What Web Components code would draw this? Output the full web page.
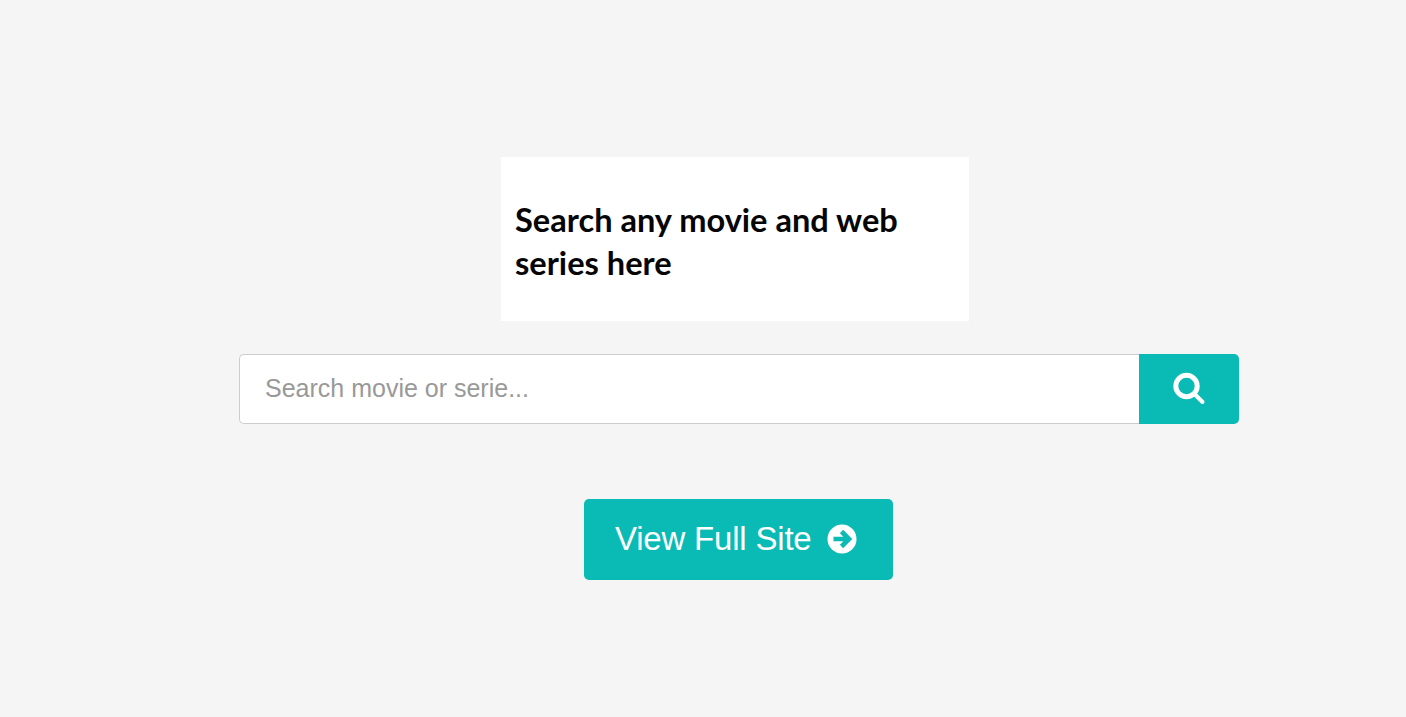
<!DOCTYPE html>
<html lang="en">
<head>
<meta charset="utf-8">
<title>Search</title>
<style>
html, body { margin: 0; background: #f5f5f5; }
</style>
</head>
<body>
<search-page>
  <search-banner>Search any movie and web<br>series here</search-banner>
  <search-box placeholder="Search movie or serie..."></search-box>
  <site-link>View Full Site</site-link>
</search-page>
<script>
(function () {
  class SearchPage extends HTMLElement {
    constructor() {
      super();
      this.attachShadow({ mode: "open" }).innerHTML = `
<style>
:host {
  display: flex;
  flex-direction: column;
  align-items: flex-start;
  box-sizing: border-box;
  height: 717px;
  padding: 157px 0 0 239px;
  overflow: hidden;
  background: #f5f5f5;
  font-family: "Liberation Sans", Arial, sans-serif;
}
</style>
<slot></slot>`;
    }
  }

  class SearchBanner extends HTMLElement {
    constructor() {
      super();
      this.attachShadow({ mode: "open" }).innerHTML = `
<style>
:host {
  display: flex;
  align-items: center;
  box-sizing: border-box;
  width: 468px;
  height: 164px;
  margin-left: 262px;
  padding: 4px 0 0 14px;
  background: #fff;
  color: #050505;
  font: 700 32.6px/43px Lato, "Open Sans", sans-serif;
  white-space: nowrap;
}
</style>
<div><slot></slot></div>`;
    }
  }

  class SearchBox extends HTMLElement {
    constructor() {
      super();
      this.attachShadow({ mode: "open" }).innerHTML = `
<style>
:host {
  display: flex;
  width: 1000px;
  height: 70px;
  margin-top: 33px;
}
input {
  flex: 1;
  min-width: 0;
  box-sizing: border-box;
  height: 100%;
  padding: 0 25px 2px;
  border: 1px solid #ccc;
  border-right: 0;
  border-radius: 5px 0 0 5px;
  outline: 0;
  background: #fff;
  color: #333;
  font: 25px "Liberation Sans", Arial, sans-serif;
}
input::placeholder { color: #999; opacity: 1; }
button {
  display: flex;
  align-items: center;
  justify-content: center;
  width: 100px;
  padding: 0;
  border: 0;
  border-radius: 0 5px 5px 0;
  background: #0abab5;
}
svg { display: block; width: 34px; height: 34px; }
</style>
<input type="text">
<button type="button" aria-label="Search">
  <svg viewBox="0 0 34 34" fill="none" stroke="#fff" stroke-linecap="round">
    <circle cx="14.500" cy="14" r="10.700" stroke-width="5"/>
    <path d="M23.500 23l7 7" stroke-width="4"/>
  </svg>
</button>`;
      this.shadowRoot.querySelector("input").placeholder = this.getAttribute("placeholder");
    }
  }

  class SiteLink extends HTMLElement {
    constructor() {
      super();
      this.attachShadow({ mode: "open" }).innerHTML = `
<style>
:host {
  display: block;
  margin: 75px 0 0 345px;
}
a {
  display: flex;
  align-items: center;
  gap: 15px;
  box-sizing: border-box;
  width: 309px;
  height: 81px;
  padding: 0 0 2px 31px;
  border-radius: 5px;
  background: #0abab5;
  color: #fff;
  font: 33px "Liberation Sans", Arial, sans-serif;
  letter-spacing: -0.2px;
  text-decoration: none;
}
svg { display: block; width: 30px; height: 30px; }
</style>
<a href="#">
  <span><slot></slot></span>
  <svg viewBox="0 0 30 30" fill="none">
    <circle cx="15" cy="15" r="14.500" fill="#fff"/>
    <path d="M6.500 15h14.500M14.500 7.500l7.500 7.500-7.500 7.500" stroke="#0abab5" stroke-width="4.600"/>
  </svg>
</a>`;
    }
  }

  customElements.define("search-page", SearchPage);
  customElements.define("search-banner", SearchBanner);
  customElements.define("search-box", SearchBox);
  customElements.define("site-link", SiteLink);
})();
</script>
</body>
</html>
